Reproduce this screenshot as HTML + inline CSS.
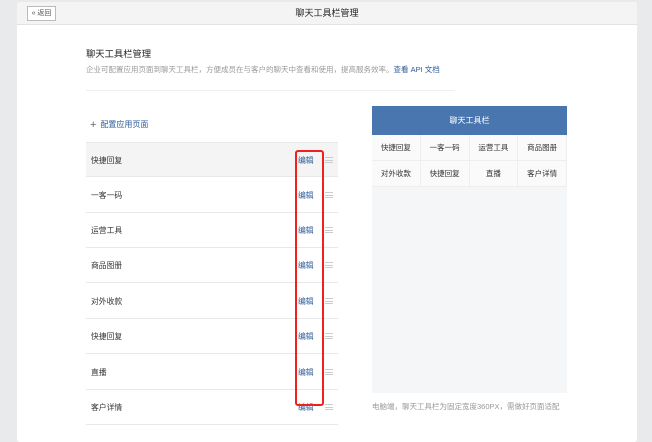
<!DOCTYPE html>
<html><head><meta charset="utf-8"><style>
*{margin:0;padding:0;box-sizing:border-box}
body{width:652px;height:432px;background:#e9eaec;font-family:"Liberation Sans","Noto Sans CJK SC",sans-serif;position:relative;overflow:hidden;color:#333}
.card{position:absolute;left:17px;top:2px;width:620px;height:440px;background:#fff;border-radius:3px;overflow:hidden}
.hd{height:23px;background:#f4f4f4;border-bottom:1px solid #e2e2e2;position:relative}
.back{position:absolute;left:10px;top:4px;width:29px;height:15px;border:1px solid #bbb;background:#fff;font-size:7px;line-height:13px;text-align:center;color:#555}
.ht{text-align:center;font-size:9px;line-height:23px;color:#222}
.a{position:absolute;font-size:8px}
.row{position:absolute;left:69px;width:252px;height:35px;border-bottom:1px solid #e8e8e8;font-size:7.8px;line-height:35px;padding-left:5px}
.row .e{position:absolute;left:212px;color:#2c5b99}
.row .m{position:absolute;left:239px;top:14px;width:8px;height:6px;border-top:1px solid #ccc;border-bottom:1px solid #ccc}
.row .m:after{content:"";position:absolute;left:0;top:1.5px;width:8px;border-top:1px solid #ccc}
.rp{position:absolute;left:355px;top:104px;width:195px;height:287px;background:#f5f6f8}
.rh{height:29px;background:#4a76b0;color:#fff;font-size:8px;text-align:center;line-height:29px}
.g{display:grid;grid-template-columns:repeat(4,1fr);background:#fff}
.g div{height:26px;line-height:26px;text-align:center;font-size:7.5px;border-right:1px solid #eee;border-bottom:1px solid #eee;background:#fafafa}
</style></head><body>
<div class="card">
<div class="hd"><div class="back">« 返回</div><div class="ht">聊天工具栏管理</div></div>
<div class="a" style="left:69px;top:44px;font-size:9.3px;color:#222">聊天工具栏管理</div>
<div class="a" style="left:69px;top:62px;font-size:7.5px;color:#999">企业可配置应用页面到聊天工具栏，方便成员在与客户的聊天中查看和使用，提高服务效率。<span style="color:#2c5b99">查看 API 文档</span></div>
<div style="position:absolute;left:69px;top:88px;width:369px;border-top:1px solid #eee"></div>
<div class="a" style="left:73px;top:117px;font-size:8px;color:#2c5b99"><span style="color:#666;font-size:11px;margin-right:4px;vertical-align:-1px">+</span>配置应用页面</div>
<div class="row" style="top:140px;background:#f4f4f4;border-top:1px solid #e8e8e8">快捷回复<span class="e">编辑</span><span class="m"></span></div>
<div class="row" style="top:176px">一客一码<span class="e">编辑</span><span class="m"></span></div>
<div class="row" style="top:211px">运营工具<span class="e">编辑</span><span class="m"></span></div>
<div class="row" style="top:246px">商品图册<span class="e">编辑</span><span class="m"></span></div>
<div class="row" style="top:282px">对外收款<span class="e">编辑</span><span class="m"></span></div>
<div class="row" style="top:317px">快捷回复<span class="e">编辑</span><span class="m"></span></div>
<div class="row" style="top:353px">直播<span class="e">编辑</span><span class="m"></span></div>
<div class="row" style="top:388px">客户详情<span class="e">编辑</span><span class="m"></span></div>
<div class="rp"><div class="rh">聊天工具栏</div>
<div class="g"><div>快捷回复</div><div>一客一码</div><div>运营工具</div><div>商品图册</div><div>对外收款</div><div>快捷回复</div><div>直播</div><div>客户详情</div></div></div>
<div class="a" style="left:355px;top:399px;font-size:7.5px;color:#999">电脑端，聊天工具栏为固定宽度360PX，需做好页面适配</div>
<div style="position:absolute;left:278px;top:148px;width:29px;height:256px;border:2px solid #f0201a;border-radius:3px"></div>
</div>
</body></html>
